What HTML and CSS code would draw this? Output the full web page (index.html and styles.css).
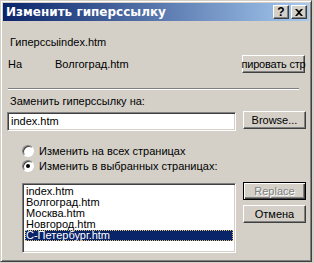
FILE: index.html
```html
<!DOCTYPE html>
<html>
<head>
<meta charset="utf-8">
<link rel="stylesheet" href="styles.css">
</head>
<body>
<div class="window">
  <div class="titlebar">
    <span class="title">Изменить гиперссылку</span>
    <div class="tbtns">
      <span class="tbtn">?</span>
      <span class="tbtn close">
        <svg width="8" height="7" viewBox="0 0 8 7"><path d="M0 0h2l2 2 2-2h2L5 3.5 8 7H6L4 5 2 7H0l3-3.5z" fill="#000"/></svg>
      </span>
    </div>
  </div>
  <div class="content">
    <div class="row1"><span>Гиперссы</span><span>index.htm</span></div>
    <div class="row2">
      <span class="na">На</span>
      <span class="target">Волгоград.htm</span>
      <span class="btn clip-btn">пировать стр</span>
    </div>
    <div class="sep"></div>
    <div class="label">Заменить гиперссылку на:</div>
    <div class="input-row">
      <div class="input">index.htm</div>
      <span class="btn">Browse...</span>
    </div>
    <div class="radio-row r1"><span class="radio"></span><span>Изменить на всех страницах</span></div>
    <div class="radio-row r2"><span class="radio checked"></span><span>Изменить в выбранных страницах:</span></div>
    <div class="bottom">
      <div class="list">
        <div class="item">index.htm</div>
        <div class="item">Волгоград.htm</div>
        <div class="item">Москва.htm</div>
        <div class="item">Новгород.htm</div>
        <div class="item sel">С-Петербург.htm</div>
      </div>
      <div class="side">
        <span class="btn default disabled">Replace</span>
        <span class="btn">Отмена</span>
      </div>
    </div>
  </div>
</div>
</body>
</html>
```
FILE: styles.css
```css
html, body { margin: 0; padding: 0; }
body {
  width: 314px; height: 263px; background: #d4d0c8;
  font-family: "Liberation Sans", Arial, sans-serif; font-size: 11px; color: #000;
  overflow: hidden;
}
.window {
  width: 312px; height: 262px; box-sizing: border-box;
  border: 1px solid; border-color: #d4d0c8 #404040 #404040 #d4d0c8;
  box-shadow: inset 1px 1px #fff, inset -1px -1px #808080;
  padding: 2px;
  background: #d4d0c8;
}
.titlebar {
  height: 18px; display: flex; align-items: center; justify-content: space-between;
  background: linear-gradient(to right, #0a246a, #a6caf0);
  padding-left: 3px; padding-right: 2px;
}
.title { color: #fff; font-weight: bold; font-size: 12px; font-family: "DejaVu Sans", sans-serif; }
.tbtns { display: flex; gap: 2px; }
.tbtn {
  width: 16px; height: 14px; box-sizing: border-box; background: #d4d0c8;
  border: 1px solid; border-color: #fff #404040 #404040 #fff;
  box-shadow: inset -1px -1px #808080;
  display: flex; align-items: center; justify-content: center;
  font-weight: bold; font-size: 12px; line-height: 1;
}
.content { display: flex; flex-direction: column; }
.row1 { margin-top: 15px; height: 12px; line-height: 12px; padding-left: 7px; display: flex; }
.row2 { margin-top: 7px; height: 18px; display: flex; align-items: center; }
.na { width: 47px; padding-left: 5px; }
.target { flex: 1; }
.btn {
  width: 63px; height: 18px; box-sizing: border-box; background: #d4d0c8;
  border: 1px solid; border-color: #fff #404040 #404040 #fff;
  box-shadow: inset -1px -1px #808080;
  display: flex; align-items: center; justify-content: center;
  font-size: 11px; white-space: nowrap;
}
.clip-btn { margin-right: 4px; width: 63px; letter-spacing: -0.2px; }
.sep { margin-top: 15px; margin-left: 5px; width: 291px; height: 0; border-top: 1px solid #808080; border-bottom: 1px solid #fff; }
.label { margin-top: 5px; height: 12px; line-height: 12px; padding-left: 7px; }
.input-row { margin-top: 4px; display: flex; align-items: flex-start; gap: 7px; padding-left: 4px; }
.input {
  margin-top: 1px; width: 229px; height: 19px; box-sizing: border-box; background: #fff;
  border: 1px solid; border-color: #808080 #fff #fff #808080;
  box-shadow: inset 1px 1px #404040, inset -1px -1px #d4d0c8;
  padding-left: 3px; line-height: 17px;
}
.radio-row { display: flex; align-items: center; gap: 5px; padding-left: 19px; height: 12px; }
.r1 { margin-top: 14px; }
.r2 { margin-top: 3px; }
.radio {
  width: 12px; height: 12px; box-sizing: border-box; border-radius: 50%; background: #fff;
  border: 1px solid; border-color: #808080 #fff #fff #808080;
  box-shadow: inset 1px 1px #404040;
  position: relative;
}
.checked::after {
  content: ""; position: absolute; left: 3px; top: 3px; width: 4px; height: 4px; border-radius: 50%; background: #000;
}
.bottom { margin-top: 10px; display: flex; gap: 7px; padding-left: 19px; }
.list {
  margin-top: 1px; width: 214px; height: 70px; box-sizing: border-box; background: #fff;
  border: 1px solid; border-color: #808080 #fff #fff #808080;
  box-shadow: inset 1px 1px #404040, inset -1px -1px #d4d0c8;
  padding: 2px 2px;
}
.item { height: 11px; line-height: 11px; padding-left: 1px; white-space: nowrap; }
.sel { background: #0a246a; color: #fff; outline: 1px dotted #e0c070; outline-offset: -1px; }
.side { display: flex; flex-direction: column; gap: 5px; }
.default { border: 1px solid #000; box-shadow: inset 1px 1px #fff, inset -1px -1px #404040, inset -2px -2px #808080; }
.disabled { color: #808080; text-shadow: 1px 1px #fff; }
```
